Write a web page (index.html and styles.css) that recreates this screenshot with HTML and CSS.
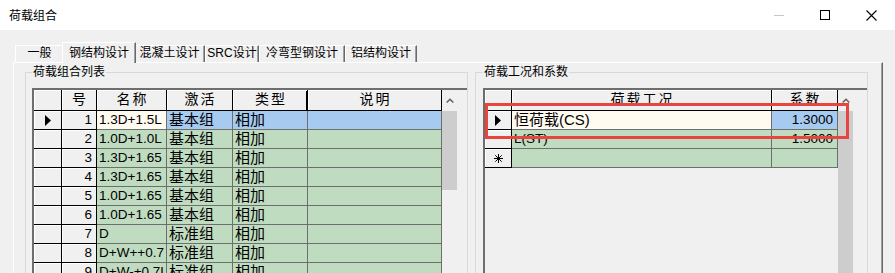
FILE: index.html
```html
<!DOCTYPE html>
<html lang="zh">
<head>
<meta charset="utf-8">
<title>荷载组合</title>
<link rel="stylesheet" href="styles.css">
</head>
<body>
<header class="titlebar">
  <span class="title">荷载组合</span>
  <div class="controls">
    <span class="ctl"><svg width="10" height="1"><rect width="10" height="1" fill="#c8c8c8"/></svg></span>
    <span class="ctl"><svg width="10" height="10"><rect x="0.5" y="0.5" width="9" height="9" fill="none" stroke="#000"/></svg></span>
    <span class="ctl"><svg width="11" height="11"><path d="M0.5 0.5L10.5 10.5M10.5 0.5L0.5 10.5" stroke="#000" stroke-width="1.1"/></svg></span>
  </div>
</header>
<main class="client">
  <nav class="tabs">
    <div class="tab">一般</div>
    <div class="tab tab-active">钢结构设计</div>
    <div class="tab">混凝土设计</div>
    <div class="tab">SRC设计</div>
    <div class="tab">冷弯型钢设计</div>
    <div class="tab">铝结构设计</div>
  </nav>
  <section class="page">
    <fieldset class="group g-left">
      <legend>荷载组合列表</legend>
      <div class="grid grid-l">
        <div class="rows">
          <div class="row head">
            <div class="cell fx"></div>
            <div class="cell fx">号</div>
            <div class="cell fx">名称</div>
            <div class="cell fx">激活</div>
            <div class="cell fx hsel">类型</div>
            <div class="cell fx">说明</div>
          </div>
          <div class="row">
            <div class="cell fx ind"><svg width="6" height="11"><polygon points="0,0 6,5.5 0,11" fill="#000"/></svg></div>
            <div class="cell fx num">1</div>
            <div class="cell cream">1.3D+1.5L</div>
            <div class="cell blue cj">基本组</div>
            <div class="cell blue cj">相加</div>
            <div class="cell blue"></div>
          </div>
          <div class="row">
            <div class="cell fx"></div><div class="cell fx num">2</div>
            <div class="cell green">1.0D+1.0L</div><div class="cell green cj">基本组</div><div class="cell green cj">相加</div><div class="cell green"></div>
          </div>
          <div class="row">
            <div class="cell fx"></div><div class="cell fx num">3</div>
            <div class="cell green">1.3D+1.65</div><div class="cell green cj">基本组</div><div class="cell green cj">相加</div><div class="cell green"></div>
          </div>
          <div class="row">
            <div class="cell fx"></div><div class="cell fx num">4</div>
            <div class="cell green">1.3D+1.65</div><div class="cell green cj">基本组</div><div class="cell green cj">相加</div><div class="cell green"></div>
          </div>
          <div class="row">
            <div class="cell fx"></div><div class="cell fx num">5</div>
            <div class="cell green">1.0D+1.65</div><div class="cell green cj">基本组</div><div class="cell green cj">相加</div><div class="cell green"></div>
          </div>
          <div class="row">
            <div class="cell fx"></div><div class="cell fx num">6</div>
            <div class="cell green">1.0D+1.65</div><div class="cell green cj">基本组</div><div class="cell green cj">相加</div><div class="cell green"></div>
          </div>
          <div class="row">
            <div class="cell fx"></div><div class="cell fx num">7</div>
            <div class="cell green">D</div><div class="cell green cj">标准组</div><div class="cell green cj">相加</div><div class="cell green"></div>
          </div>
          <div class="row">
            <div class="cell fx"></div><div class="cell fx num">8</div>
            <div class="cell green">D+W++0.7</div><div class="cell green cj">标准组</div><div class="cell green cj">相加</div><div class="cell green"></div>
          </div>
          <div class="row">
            <div class="cell fx"></div><div class="cell fx num">9</div>
            <div class="cell green">D+W-+0.7L</div><div class="cell green cj">标准组</div><div class="cell green cj">相加</div><div class="cell green"></div>
          </div>
        </div>
        <div class="vscroll">
          <div class="arrow"><svg width="8" height="5"><polyline points="0.7,4.5 4,1.2 7.3,4.5" fill="none" stroke="#606060" stroke-width="1.5"/></svg></div>
          <div class="thumb"></div>
          <div class="track"></div>
        </div>
      </div>
    </fieldset>
    <fieldset class="group g-right">
      <legend>荷载工况和系数</legend>
      <div class="grid grid-r">
        <div class="rows">
          <div class="row head">
            <div class="cell fx"></div>
            <div class="cell fx">荷载工况</div>
            <div class="cell fx">系数</div>
          </div>
          <div class="row">
            <div class="cell fx ind"><svg width="6" height="11"><polygon points="0,0 6,5.5 0,11" fill="#000"/></svg></div>
            <div class="cell cream cj">恒荷载(CS)</div>
            <div class="cell blue num">1.3000</div>
          </div>
          <div class="row">
            <div class="cell fx"></div>
            <div class="cell green">L(ST)</div>
            <div class="cell green num">1.5000</div>
          </div>
          <div class="row">
            <div class="cell fx ind"><svg width="9" height="9"><path d="M4.5 0V9M0 4.5H9M1.3 1.3L7.7 7.7M7.7 1.3L1.3 7.7" stroke="#000" stroke-width="1"/></svg></div>
            <div class="cell green"></div>
            <div class="cell green"></div>
          </div>
        </div>
        <div class="vscroll">
          <div class="arrow"><svg width="8" height="5"><polyline points="0.7,4.5 4,1.2 7.3,4.5" fill="none" stroke="#606060" stroke-width="1.5"/></svg></div>
          <div class="thumb"></div>
        </div>
        <div class="mark"></div>
      </div>
    </fieldset>
  </section>
</main>
</body>
</html>
```
FILE: styles.css
```css
* { box-sizing: border-box; }
html, body { margin: 0; padding: 0; }
body {
  width: 895px;
  height: 273px;
  overflow: hidden;
  background: #f0f0f0;
  color: #000;
  font-family: "Liberation Sans", "Noto Sans CJK SC", sans-serif;
}
.titlebar {
  height: 30px;
  background: #fff;
  display: flex;
  align-items: center;
  justify-content: space-between;
}
.title {
  padding-left: 9px;
  font-size: 12px;
  line-height: 14px;
  font-family: "Noto Sans CJK SC", sans-serif;
}
.controls { display: flex; margin-right: 1px; }
.ctl {
  width: 46px;
  height: 30px;
  display: flex;
  align-items: center;
  justify-content: center;
}
.ctl svg { display: block; }

.client { height: 243px; padding-top: 12px; }

.tabs {
  display: flex;
  align-items: flex-end;
  height: 20px;
  padding-left: 15px;
}
.tab {
  height: 17px;
  border-top: 1px solid #fff;
  border-left: 1px solid #fff;
  border-right: 1px solid #696969;
  box-shadow: inset -1px 0 0 #a0a0a0;
  background: #f0f0f0;
  font-size: 12px;
  line-height: 15px;
  text-align: center;
  white-space: nowrap;
}
.tab-active {
  position: relative;
  z-index: 1;
  height: 21px;
  margin: 0 -2px -1px;
  padding-top: 2px;
  line-height: 17px;
}
.tabs .tab:nth-child(1) { width: 49px; }
.tabs .tab:nth-child(2) { width: 74px; }
.tabs .tab:nth-child(3) { width: 71px; }
.tabs .tab:nth-child(4) { width: 54px; }
.tabs .tab:nth-child(5) { width: 86px; }
.tabs .tab:nth-child(6) { width: 72px; }

.page {
  margin-left: 13px;
  width: 870px;
  height: 240px;
  border: 1px solid;
  border-color: #fff #696969 #696969 #fff;
  box-shadow: inset -1px -1px 0 #a0a0a0;
  display: flex;
  gap: 7px;
  padding: 2px 0 0 11px;
}

.group {
  margin: 0;
  min-width: 0;
  height: 232px;
  border: 1px solid #d8d8d8;
  padding: 9px 0 0 6px;
}
.g-left { width: 443px; }
.g-right { width: 393px; padding-left: 7px; }
.group legend {
  padding: 0 1px;
  margin-left: 0;
  font-size: 12px;
  line-height: 14px;
}

.grid {
  position: relative;
  display: flex;
  height: 200px;
  border-top: 2px solid #6e6e6e;
  border-left: 2px solid #6e6e6e;
  background: #f0f0f0;
}
.rows { flex: none; }
.row { display: grid; }
.grid-l .row { grid-template-columns: 28px 35px 70px 66px 75px 134px; }
.grid-r .row { grid-template-columns: 27px 260px 66px; }

.cell {
  height: 19px;
  line-height: 18px;
  border-right: 1px solid #6e6e6e;
  border-bottom: 1px solid #6e6e6e;
  padding: 0 2px;
  font-size: 13.5px;
  white-space: nowrap;
  overflow: hidden;
}
.cj { font-size: 15px; }
.head .cell {
  height: 21px;
  line-height: 19px;
  text-align: center;
  font-size: 14px;
  letter-spacing: 2px;
  padding: 0 0 0 2px;
}
.fx {
  background: #f0f0f0;
  border-color: #000;
  box-shadow: inset 1px 1px 0 #fff;
}
.head .hsel { box-shadow: inset 1px 1px 0 #fff, inset -1px 0 0 #000; }
.num { text-align: right; padding-right: 4px; }
.ind { display: flex; align-items: center; justify-content: center; }
.ind svg { display: block; }
.cream { background: #fffbf0; }
.blue { background: #a6caf0; }
.green { background: #c0dcc0; }

.vscroll { width: 15px; display: flex; flex-direction: column; }
.arrow {
  height: 21px;
  display: flex;
  align-items: center;
  justify-content: center;
  background: #f0f0f0;
}
.arrow svg { display: block; }
.thumb { background: #cdcdcd; }
.grid-l .thumb { height: 79px; }
.grid-r .thumb { flex: 1; }
.track { flex: 1; background: #f0f0f0; }

.mark {
  position: absolute;
  left: 0;
  top: 13px;
  width: 364px;
  height: 36px;
  border: 3px solid #e8453f;
}
```
